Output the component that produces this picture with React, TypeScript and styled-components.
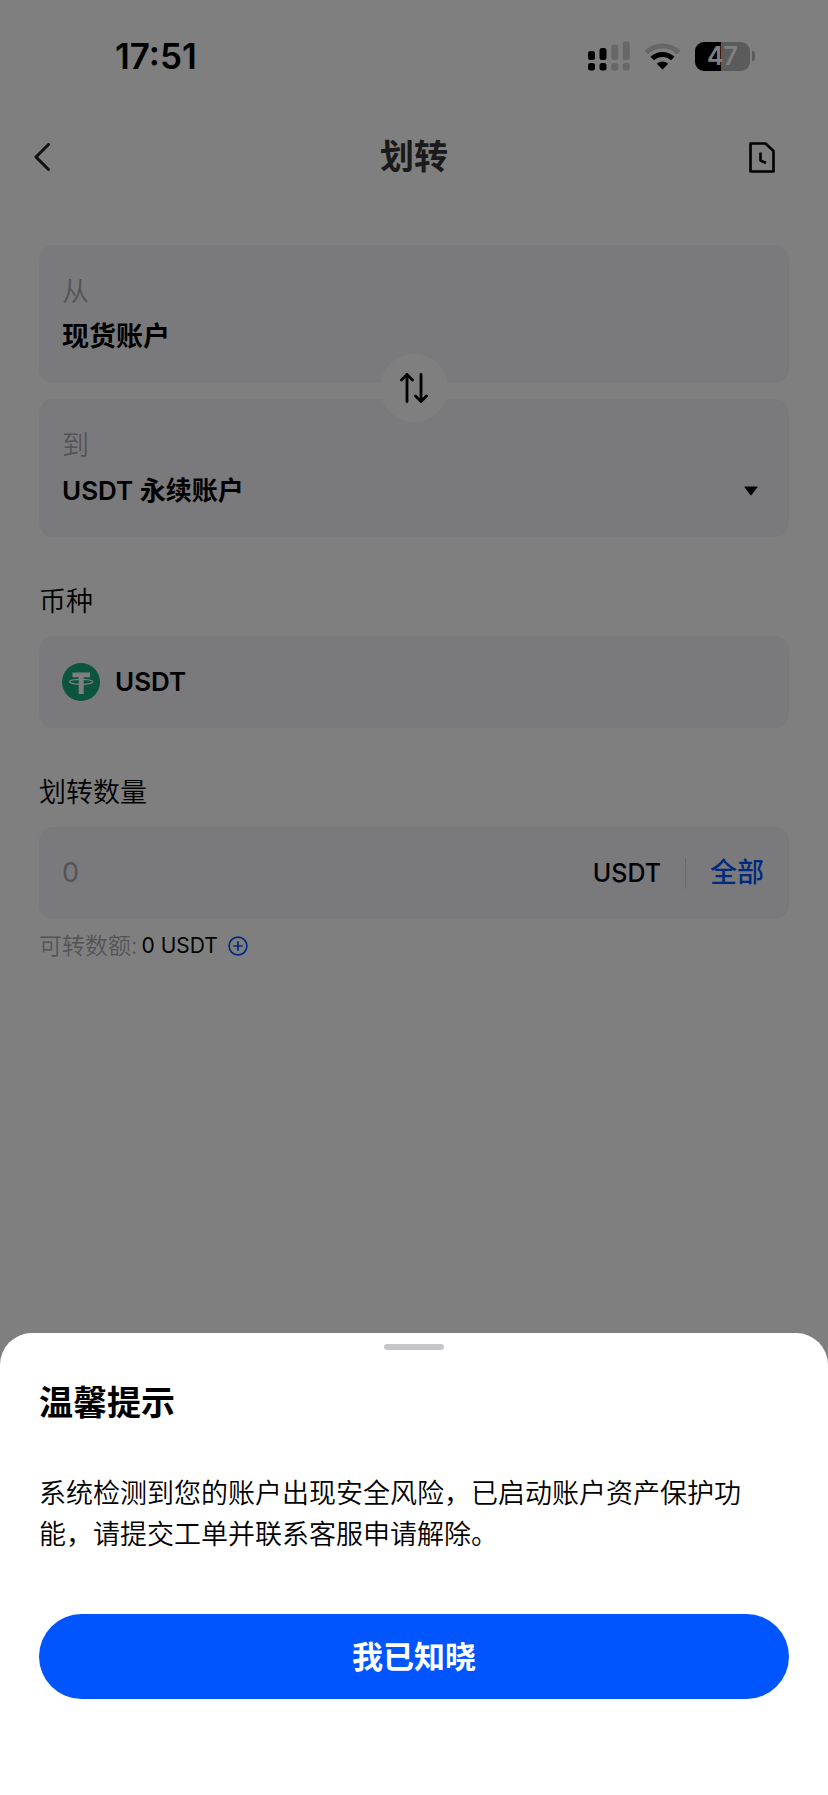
import React, { useState } from "react";
import styled, { createGlobalStyle } from "styled-components";

const GlobalStyle = createGlobalStyle`
  *, *::before, *::after { box-sizing: border-box; }
  body {
    margin: 0;
    background: #ffffff;
    color: #000000;
    font-family: Inter, "Noto Sans CJK SC", sans-serif;
    font-size: 27px;
    line-height: 40px;
  }
  button, input, select { font: inherit; color: inherit; margin: 0; padding: 0; border: 0; background: none; }
  button { cursor: pointer; }
  h1, h2, p { margin: 0; }
  svg { display: block; }
`;

const Page = styled.div`
  min-height: 100vh;
  display: flex;
  flex-direction: column;
`;

const StatusBar = styled.div`
  display: flex;
  align-items: center;
  justify-content: space-between;
  height: 112px;
  padding: 0 73px 0 115px;
`;

const Clock = styled.time`
  font-size: 35px;
  font-weight: 600;
`;

const StatusIcons = styled.div`
  display: flex;
  align-items: center;
  gap: 14px;
`;

const Battery = styled.div`
  display: flex;
  align-items: center;
  gap: 2px;
`;

const BatteryBody = styled.div`
  width: 55px;
  height: 29px;
  border-radius: 9px;
  background: linear-gradient(to right, #000000 48%, #b6b6b6 48%);
  color: #ffffff;
  font-size: 25px;
  font-weight: 600;
  line-height: 29px;
  text-align: center;
`;

const BatteryCap = styled.div`
  width: 3px;
  height: 10px;
  border-radius: 0 3px 3px 0;
  background: #b6b6b6;
`;

const Header = styled.header`
  display: grid;
  grid-template-columns: 48px 1fr 48px;
  align-items: center;
  height: 90px;
  padding: 0 45px 0 26px;
`;

const IconButton = styled.button<{ $align: string }>`
  display: flex;
  justify-content: ${({ $align }) => $align};
  padding: 8px;
`;

const PageTitle = styled.h1`
  padding-left: 19px;
  color: #343434;
  font-size: 34px;
  font-weight: 600;
  line-height: 48px;
  text-align: center;
`;

const Form = styled.main`
  display: flex;
  flex-direction: column;
  gap: 45px;
  padding: 43px 39px;
`;

const AccountGroup = styled.div`
  position: relative;
  display: flex;
  flex-direction: column;
  gap: 16px;
`;

const AccountCard = styled.div`
  display: flex;
  flex-direction: column;
  gap: 5px;
  padding: 27px 23px 26px;
  border-radius: 14px;
  background: #f5f5f9;
`;

const AccountLabel = styled.label`
  color: #a8a8ae;
  font-weight: 350;
`;

const AccountValue = styled.output`
  font-weight: 600;
`;

const SelectRow = styled.div`
  display: flex;
  align-items: center;
  padding-right: 8px;
`;

const AccountSelect = styled.select`
  flex: 1;
  min-width: 0;
  height: 40px;
  appearance: none;
  font-size: 26px;
  font-weight: 600;
`;

const SwapButton = styled.button`
  position: absolute;
  top: 109px;
  left: 50%;
  display: flex;
  align-items: center;
  justify-content: center;
  width: 68px;
  height: 68px;
  border-radius: 50%;
  background: #ffffff;
  transform: translateX(-50%);
`;

const Field = styled.section`
  display: flex;
  flex-direction: column;
`;

const FieldLabel = styled.label`
  padding-bottom: 14px;
  font-weight: 350;
`;

const FieldCard = styled.div`
  display: flex;
  align-items: center;
  height: 92px;
  padding: 0 25px 0 23px;
  border-radius: 14px;
  background: #f5f5f9;
`;

const CoinName = styled.output`
  padding-left: 15px;
  font-size: 26px;
  font-weight: 600;
`;

const AmountInput = styled.input`
  flex: 1;
  min-width: 0;
  height: 40px;
  outline: none;
  &::placeholder { color: #a8a8ae; opacity: 1; }
`;

const Unit = styled.span`
  font-size: 25px;
  font-weight: 500;
`;

const Divider = styled.span`
  width: 1px;
  height: 31px;
  margin: 0 24px;
  background: #d4d4d8;
`;

const AllButton = styled.button`
  color: #0055ff;
  font-weight: 500;
`;

const Available = styled.p`
  display: flex;
  align-items: center;
  padding-top: 11px;
  font-size: 23px;
  line-height: 32px;
`;

const Muted = styled.span`
  padding-right: 4px;
  color: #a8a8ae;
  font-weight: 350;
`;

const AvailableAmount = styled.span`
  font-size: 21px;
`;

const AddButton = styled.button`
  padding-left: 10px;
`;

const Scrim = styled.div`
  position: fixed;
  inset: 0;
  display: flex;
  flex-direction: column;
  justify-content: flex-end;
  background: rgba(0, 0, 0, 0.5);
`;

const Sheet = styled.section`
  display: flex;
  flex-direction: column;
  padding: 11px 39px 96px;
  border-radius: 32px 32px 0 0;
  background: #ffffff;
`;

const Handle = styled.div`
  align-self: center;
  width: 60px;
  height: 6px;
  border-radius: 3px;
  background: #c5c6ca;
`;

const SheetTitle = styled.h2`
  padding-top: 29px;
  font-size: 34px;
  font-weight: 600;
  line-height: 48px;
`;

const SheetText = styled.p`
  padding: 46px 0 59px;
  font-weight: 350;
  line-height: 41px;
`;

const ConfirmButton = styled.button`
  height: 85px;
  border-radius: 43px;
  background: #0055ff;
  color: #ffffff;
  font-size: 31px;
  font-weight: 600;
`;

const SignalIcon = () => (
  <svg width="42" height="30" viewBox="0 0 42 30" aria-hidden="true">
    <g fill="#000000">
      <rect x="0" y="10" width="7" height="9" rx="2.500" />
      <rect x="0" y="22" width="7" height="7.500" rx="2.500" />
      <rect x="11.500" y="7" width="7" height="12" rx="2.500" />
      <rect x="11.500" y="22" width="7" height="7.500" rx="2.500" />
    </g>
    <g fill="#cfcfcf">
      <rect x="23.300" y="3.500" width="7" height="15.500" rx="2.500" />
      <rect x="23.300" y="22" width="7" height="7.500" rx="2.500" />
      <rect x="34.800" y="0.500" width="7" height="18.500" rx="2.500" />
      <rect x="34.800" y="22" width="7" height="7.500" rx="2.500" />
    </g>
  </svg>
);

const WifiIcon = () => (
  <svg width="37" height="28" viewBox="0 0 37 28" fill="none" aria-hidden="true">
    <path d="M2.200 10.500a23.500 23.500 0 0 1 32.600 0" stroke="#cfcfcf" strokeWidth="5" />
    <path d="M8.200 16.500a15 15 0 0 1 20.600 0" stroke="#000000" strokeWidth="5" />
    <path d="M18.500 27.500 12.800 21.800a8.200 8.200 0 0 1 11.400 0Z" fill="#000000" />
  </svg>
);

const BackIcon = () => (
  <svg width="16" height="28" viewBox="0 0 16 28" fill="none" stroke="#222222" strokeWidth="3" strokeLinecap="round" strokeLinejoin="round" aria-hidden="true">
    <path d="M14.500 1.500 2 14l12.500 12.500" />
  </svg>
);

const HistoryIcon = () => (
  <svg width="26" height="31" viewBox="0 0 26 31" fill="none" stroke="#000000" strokeWidth="2.600" strokeLinejoin="round" aria-hidden="true">
    <path d="M1.500 1.500H16.500L24.500 9V29.500H1.500Z" />
    <path d="M11.500 10.500V18.500L17 21" />
  </svg>
);

const SwapIcon = () => (
  <svg width="28" height="30" viewBox="0 0 28 30" fill="none" stroke="#000000" strokeWidth="2.800" strokeLinecap="round" strokeLinejoin="round" aria-hidden="true">
    <path d="M7 28.500V1.500M1.500 7 7 1.500 12.500 7" />
    <path d="M21 1.500V28.500M15.500 23 21 28.500 26.500 23" />
  </svg>
);

const CaretIcon = () => (
  <svg width="14" height="10" viewBox="0 0 14 10" aria-hidden="true">
    <path d="M1 .5h12a.5.5 0 0 1 .4.800L7.600 9a.8.8 0 0 1-1.200 0L.6 1.300A.5.5 0 0 1 1 .5Z" fill="#000000" />
  </svg>
);

const TetherIcon = () => (
  <svg width="38" height="38" viewBox="0 0 38 38" aria-hidden="true">
    <circle cx="19" cy="19" r="19" fill="#18a87c" />
    <path d="M10.500 9.500h17.500v4.700h-6.300v16.800h-5V14.200h-6.200Z" fill="#ffffff" />
    <ellipse cx="19.200" cy="18.800" rx="11.700" ry="2.500" fill="none" stroke="#ffffff" strokeWidth="1.200" />
  </svg>
);

const PlusIcon = () => (
  <svg width="20" height="20" viewBox="0 0 20 20" fill="none" stroke="#0055ff" strokeWidth="1.700" aria-hidden="true">
    <circle cx="10" cy="10" r="8.900" />
    <path d="M10 5.300v9.400M5.300 10h9.400" />
  </svg>
);

export default function App() {
  const [amount, setAmount] = useState("");

  return (
    <>
      <GlobalStyle />
      <Page>
        <StatusBar>
          <Clock>17:51</Clock>
          <StatusIcons>
            <SignalIcon />
            <WifiIcon />
            <Battery>
              <BatteryBody>47</BatteryBody>
              <BatteryCap />
            </Battery>
          </StatusIcons>
        </StatusBar>

        <Header>
          <IconButton $align="flex-start" aria-label="返回">
            <BackIcon />
          </IconButton>
          <PageTitle>划转</PageTitle>
          <IconButton $align="flex-end" aria-label="历史记录">
            <HistoryIcon />
          </IconButton>
        </Header>

        <Form>
          <AccountGroup>
            <AccountCard>
              <AccountLabel htmlFor="from-account">从</AccountLabel>
              <AccountValue id="from-account">现货账户</AccountValue>
            </AccountCard>
            <AccountCard>
              <AccountLabel htmlFor="to-account">到</AccountLabel>
              <SelectRow>
                <AccountSelect id="to-account">
                  <option>USDT 永续账户</option>
                </AccountSelect>
                <CaretIcon />
              </SelectRow>
            </AccountCard>
            <SwapButton aria-label="互换账户">
              <SwapIcon />
            </SwapButton>
          </AccountGroup>

          <Field>
            <FieldLabel htmlFor="coin">币种</FieldLabel>
            <FieldCard>
              <TetherIcon />
              <CoinName id="coin">USDT</CoinName>
            </FieldCard>
          </Field>

          <Field>
            <FieldLabel htmlFor="amount">划转数量</FieldLabel>
            <FieldCard>
              <AmountInput
                id="amount"
                inputMode="decimal"
                placeholder="0"
                value={amount}
                onChange={(event) => setAmount(event.target.value)}
              />
              <Unit>USDT</Unit>
              <Divider />
              <AllButton>全部</AllButton>
            </FieldCard>
            <Available>
              <Muted>可转数额:</Muted>
              <AvailableAmount>0 USDT</AvailableAmount>
              <AddButton aria-label="充值">
                <PlusIcon />
              </AddButton>
            </Available>
          </Field>
        </Form>
      </Page>

      <Scrim>
        <Sheet role="dialog" aria-modal="true" aria-labelledby="sheet-title">
          <Handle />
          <SheetTitle id="sheet-title">温馨提示</SheetTitle>
          <SheetText>系统检测到您的账户出现安全风险，已启动账户资产保护功能，请提交工单并联系客服申请解除。</SheetText>
          <ConfirmButton>我已知晓</ConfirmButton>
        </Sheet>
      </Scrim>
    </>
  );
}
